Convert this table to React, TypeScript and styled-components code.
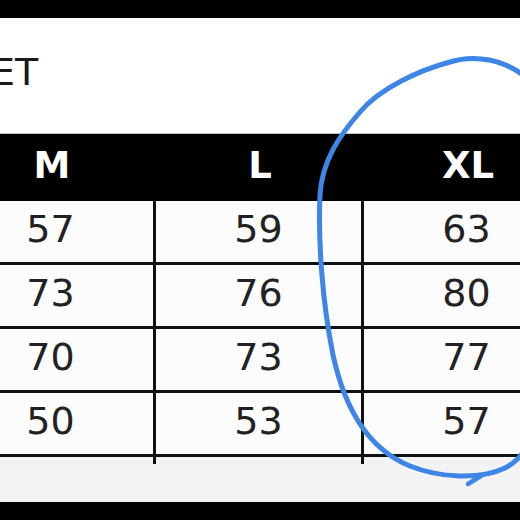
import React from 'react';
import styled, { createGlobalStyle } from 'styled-components';

const GlobalStyle = createGlobalStyle`
  html, body {
    margin: 0;
    padding: 0;
    background: #ffffff;
    overflow: hidden;
  }
`;

const Page = styled.div`
  position: relative;
  width: 520px;
  height: 520px;
  overflow: hidden;
  display: flex;
  flex-direction: column;
  font-family: "DejaVu Sans", Verdana, sans-serif;
  background: #f3f3f3;
`;

const Bar = styled.div`
  height: 18px;
  flex-shrink: 0;
  background: #000;
`;

const TitleArea = styled.div`
  height: 116px;
  flex-shrink: 0;
  box-sizing: border-box;
  padding-top: 35px;
  background: #ffffff;
  border-bottom: 1px solid #c4c4c4;
`;

const Title = styled.h1`
  margin: 0 0 0 -9px;
  font-size: 38px;
  line-height: 38px;
  font-weight: 400;
  color: #1a1a1a;
`;

const Table = styled.div`
  display: grid;
  grid-template-columns: repeat(3, 208px);
  margin-left: -52px;
`;

const HeadCell = styled.div`
  height: 67px;
  box-sizing: border-box;
  padding-bottom: 4px;
  display: flex;
  align-items: center;
  justify-content: center;
  background: #000;
  color: #fff;
  font-size: 37px;
  font-weight: 700;
`;

const Cell = styled.div`
  height: 64px;
  box-sizing: border-box;
  padding-bottom: 5px;
  display: flex;
  align-items: center;
  justify-content: center;
  background: #fcfcfc;
  color: #222;
  font-size: 38px;
  border-right: 3px solid #111;
  border-bottom: 3px solid #111;
`;

const Stub = styled.div<{ $line?: boolean }>`
  height: 7px;
  border-right: 3px solid ${(p) => (p.$line ? '#111' : 'transparent')};
`;

const Spacer = styled.div`
  flex: 1;
`;

const Marker = styled.svg`
  position: absolute;
  inset: 0;
  pointer-events: none;
`;

const sizes = ['M', 'L', 'XL'];
const rows = [
  [57, 59, 63],
  [73, 76, 80],
  [70, 73, 77],
  [50, 53, 57],
];

export default function App() {
  return (
    <>
      <GlobalStyle />
      <Page>
        <Bar />
        <TitleArea>
          <Title>ET</Title>
        </TitleArea>
        <Table>
          {sizes.map((s) => (
            <HeadCell key={s}>{s}</HeadCell>
          ))}
          {rows.map((r, i) =>
            r.map((v, j) => <Cell key={`${i}-${j}`}>{v}</Cell>)
          )}
          <Stub $line />
          <Stub $line />
          <Stub />
        </Table>
        <Spacer />
        <Bar />
        {/* hand-drawn circle around the XL column */}
        <Marker width="520" height="520" viewBox="0 0 520 520">
          <path
            d="M 524 76 C 505 60, 475 54, 450 62 C 420 70, 380 88, 360 112 C 340 135, 322 160, 320 195 C 318 240, 322 300, 333 355 C 345 410, 370 450, 410 466 C 440 478, 480 480, 505 468 C 515 463, 522 455, 524 450"
            fill="none"
            stroke="#3d85e6"
            strokeWidth="5"
            strokeLinecap="round"
          />
          <path d="M 484 474 L 468 484" fill="none" stroke="#3d85e6" strokeWidth="4.5" strokeLinecap="round" />
        </Marker>
      </Page>
    </>
  );
}
